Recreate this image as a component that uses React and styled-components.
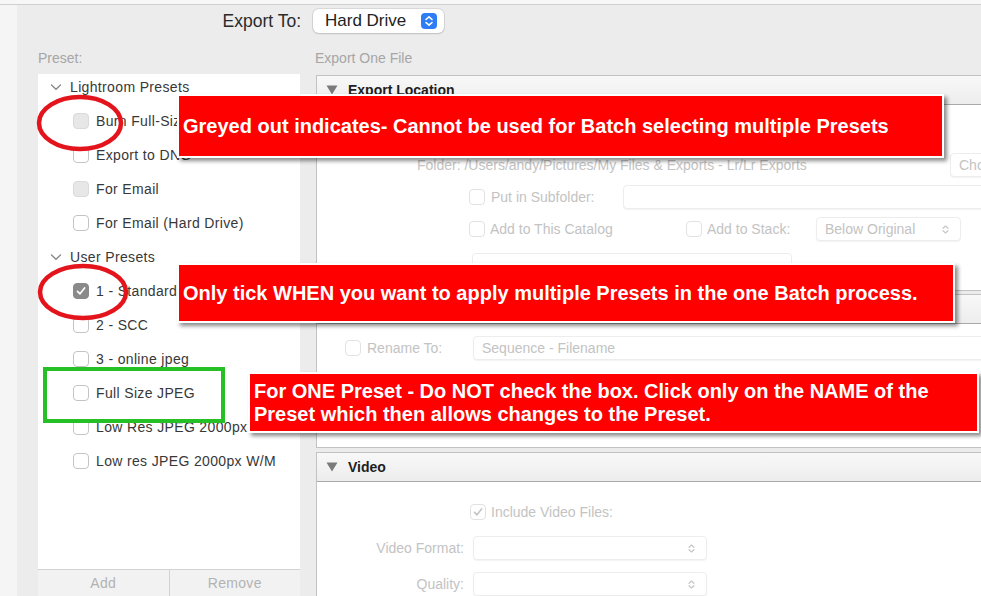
import React from 'react'
import styled, { createGlobalStyle } from 'styled-components'

const GlobalStyle = createGlobalStyle`
  html, body { margin: 0; padding: 0; }
  body {
    width: 981px;
    height: 596px;
    overflow: hidden;
    background: #f7f7f7;
    font-family: "Liberation Sans", Arial, sans-serif;
  }
`;

const Screen = styled.div`
  position: relative;
  width: 981px;
  height: 596px;
  padding-top: 4px;
  box-sizing: border-box;
  overflow: hidden;
  background: #f7f7f7;
`;

const Window = styled.div`
  height: 592px;
  box-sizing: border-box;
  border-top: 1px solid #d0d0d0;
  display: flex;
`;

const SideStrip = styled.div`
  width: 17px;
  background: #f5f5f5;
`;

const Main = styled.div`
  flex: 1;
  background: #ececec;
  display: flex;
  flex-direction: column;
  min-width: 0;
  min-height: 0;
`;

const TopBar = styled.div`
  height: 38px;
  flex: none;
  display: grid;
  grid-template-columns: 284px auto;
  column-gap: 12px;
  padding-top: 4px;
  box-sizing: border-box;
`;

const TopLabel = styled.div`
  text-align: right;
  font-size: 17.5px;
  line-height: 24px;
  color: #2a2a2a;
`;

const Popup = styled.div`
  width: 131px;
  height: 24px;
  box-sizing: border-box;
  display: flex;
  align-items: center;
  justify-content: space-between;
  padding: 0 7px 0 12px;
  background: #fff;
  border-radius: 6px;
  box-shadow: 0 0 0 1px rgba(0, 0, 0, 0.08), 0 1px 2px rgba(0, 0, 0, 0.12);
  font-size: 17px;
  color: #222;
`;

const Columns = styled.div`
  flex: 1;
  display: grid;
  grid-template-columns: 262px 1fr;
  grid-template-rows: minmax(0, 1fr);
  column-gap: 14px;
  padding-left: 21px;
  min-height: 0;
  overflow: hidden;
`;

const Column = styled.div`
  display: flex;
  flex-direction: column;
  min-width: 0;
  min-height: 0;
  overflow: hidden;
`;

const ColumnLabel = styled.div`
  height: 31px;
  flex: none;
  box-sizing: border-box;
  padding-top: 6px;
  font-size: 14px;
  line-height: 18px;
  color: #a6a6a6;
  padding-left: ${(p) => p.$indent || 0}px;
`;

const PresetPanel = styled.div`
  flex: 1;
  min-height: 0;
  display: flex;
  flex-direction: column;
  background: #fff;
`;

const PresetList = styled.div`
  flex: 1;
  min-height: 0;
`;

const PresetRow = styled.div`
  height: 34px;
  box-sizing: border-box;
  padding: 0 0 8px ${(p) => (p.$group ? 12 : 35)}px;
  display: flex;
  align-items: center;
  gap: ${(p) => (p.$group ? 8 : 7)}px;
  font-size: 14px;
  letter-spacing: 0.35px;
  color: #383838;
  white-space: nowrap;
`;

const ButtonBar = styled.div`
  height: 26px;
  flex: none;
  display: flex;
  border-top: 1px solid #d2d2d2;
  background: #f2f2f2;
`;

const BarButton = styled.div`
  flex: 1;
  display: flex;
  align-items: center;
  justify-content: center;
  font-size: 14px;
  letter-spacing: 0.3px;
  color: #b3b3b3;
  & + & { border-left: 1px solid #d2d2d2; }
`;

const Box = styled.span`
  flex: none;
  width: 16px;
  height: 16px;
  box-sizing: border-box;
  border-radius: 4px;
  display: inline-flex;
  align-items: center;
  justify-content: center;
  border: 1px solid
    ${(p) => ({ off: '#c4c4c4', greyed: '#dadada', checked: '#8a8a8a', faint: '#e2e2e2', faintChecked: '#e2e2e2' }[p.$state])};
  background: ${(p) => ({ off: '#fff', greyed: '#e7e7e7', checked: '#8a8a8a', faint: '#fff', faintChecked: '#fff' }[p.$state])};
`;

const ScrollArea = styled.div`
  flex: 1;
  min-height: 0;
  overflow: hidden;
  padding: 1px 0 0 2px;
  min-width: 0;
`;

const Section = styled.div`
  width: 700px;
  border: 1px solid #c2c2c2;
  margin-bottom: ${(p) => p.$gap || 3}px;
  background: #fff;
`;

const SectionHeader = styled.div`
  height: 28px;
  display: flex;
  align-items: center;
  gap: 10px;
  padding-left: 9px;
  border-bottom: 1px solid #a9a9a9;
  background: linear-gradient(#f8f8f8, #ededed);
  font-size: 14px;
  font-weight: bold;
  color: #1e1e1e;
`;

const SectionBody = styled.div`
  height: ${(p) => p.$height}px;
  padding-top: ${(p) => p.$top}px;
  box-sizing: border-box;
  display: flex;
  flex-direction: column;
  gap: ${(p) => p.$gap || 8}px;
`;

const FieldRow = styled.div`
  height: 24px;
  flex: none;
  display: flex;
  align-items: center;
  padding-left: ${(p) => p.$indent}px;
  font-size: 14px;
  color: #c3c3c3;
  white-space: nowrap;
  margin-top: ${(p) => p.$shift || 0}px;
`;

const FieldText = styled.span`
  flex: none;
  width: ${(p) => (p.$width ? `${p.$width}px` : 'auto')};
  margin-left: ${(p) => p.$gap || 0}px;
  text-align: ${(p) => p.$align || 'left'};
  overflow: hidden;
`;

const Field = styled.div`
  flex: none;
  width: ${(p) => p.$width}px;
  height: 24px;
  box-sizing: border-box;
  margin-left: ${(p) => p.$gap || 0}px;
  display: flex;
  align-items: center;
  justify-content: space-between;
  padding: 0 8px;
  border: 1px solid #ededed;
  border-radius: 4px;
  box-shadow: 0 1px 1px rgba(0, 0, 0, 0.05);
  background: #fff;
  color: #c3c3c3;
  font-size: 14px;
`;

const Note = styled.div`
  position: absolute;
  left: ${(p) => p.$x}px;
  top: ${(p) => p.$y}px;
  width: ${(p) => p.$w}px;
  height: ${(p) => p.$h}px;
  box-sizing: border-box;
  padding: 0 4px;
  display: flex;
  flex-direction: column;
  justify-content: center;
  background: #fe0000;
  border: 2px solid #fff;
  box-shadow: 3px 3px 4px rgba(0, 0, 0, 0.45);
  color: #fff;
  font-size: 20px;
  line-height: 23px;
  font-weight: bold;
  white-space: nowrap;
`;

const Marks = styled.svg`
  position: absolute;
  left: 0;
  top: 0;
  pointer-events: none;
`;

const Stepper = ({ color = '#2f7df6', stroke = '#fff', size = 16 }) => (
  <svg width={size} height={size} viewBox="0 0 16 16">
    {color !== 'none' && <rect x="0" y="0" width="16" height="16" rx="4" fill={color} />}
    <polyline points="5,6.5 8,3.8 11,6.5" fill="none" stroke={stroke} strokeWidth="1.6" strokeLinecap="round" strokeLinejoin="round" />
    <polyline points="5,9.5 8,12.2 11,9.5" fill="none" stroke={stroke} strokeWidth="1.6" strokeLinecap="round" strokeLinejoin="round" />
  </svg>
);

const Chevron = () => (
  <svg width="12" height="8" viewBox="0 0 12 8">
    <polyline points="1.5,2 6,6.2 10.5,2" fill="none" stroke="#8a8a8a" strokeWidth="1.4" strokeLinecap="round" />
  </svg>
);

const Triangle = () => (
  <svg width="12" height="10" viewBox="0 0 12 10">
    <polygon points="0.5,0.5 11.5,0.5 6,9.5" fill="#7a7a7a" />
  </svg>
);

const Tick = ({ color = '#fff' }) => (
  <svg width="12" height="12" viewBox="0 0 12 12">
    <polyline points="2.5,6.3 5,8.8 9.6,3" fill="none" stroke={color} strokeWidth="1.7" strokeLinecap="round" strokeLinejoin="round" />
  </svg>
);

const Check = ({ state }) => (
  <Box $state={state}>
    {state === 'checked' && <Tick />}
    {state === 'faintChecked' && <Tick color="#c6c6c6" />}
  </Box>
);

const presets = [
  { group: 'Lightroom Presets' },
  { name: 'Burn Full-Sized JPEGs', state: 'greyed' },
  { name: 'Export to DNG', state: 'off' },
  { name: 'For Email', state: 'greyed' },
  { name: 'For Email (Hard Drive)', state: 'off' },
  { group: 'User Presets' },
  { name: '1 - Standard', state: 'checked' },
  { name: '2 - SCC', state: 'off' },
  { name: '3 - online jpeg', state: 'off' },
  { name: 'Full Size JPEG', state: 'off' },
  { name: 'Low Res JPEG 2000px', state: 'off' },
  { name: 'Low res JPEG 2000px W/M', state: 'off' },
];

export default function App() {
  return (
    <Screen>
      <GlobalStyle />
      <Window>
        <SideStrip />
        <Main>
          <TopBar>
            <TopLabel>Export To:</TopLabel>
            <Popup>
              Hard Drive
              <Stepper />
            </Popup>
          </TopBar>

          <Columns>
            <Column>
              <ColumnLabel>Preset:</ColumnLabel>
              <PresetPanel>
                <PresetList>
                  {presets.map((p) =>
                    p.group ? (
                      <PresetRow key={p.group} $group>
                        <Chevron />
                        {p.group}
                      </PresetRow>
                    ) : (
                      <PresetRow key={p.name}>
                        <Check state={p.state} />
                        {p.name}
                      </PresetRow>
                    )
                  )}
                </PresetList>
                <ButtonBar>
                  <BarButton>Add</BarButton>
                  <BarButton>Remove</BarButton>
                </ButtonBar>
              </PresetPanel>
            </Column>

            <Column>
              <ColumnLabel $indent={1}>Export One File</ColumnLabel>
              <ScrollArea>
                <Section>
                  <SectionHeader>
                    <Triangle />
                    Export Location
                  </SectionHeader>
                  <SectionBody $height={185} $top={48}>
                    <FieldRow $indent={100}>
                      <FieldText $width={533}>Folder: /Users/andy/Pictures/My Files &amp; Exports - Lr/Lr Exports</FieldText>
                      <Field $width={90}>Choose...</Field>
                    </FieldRow>
                    <FieldRow $indent={152}>
                      <Check state="faint" />
                      <FieldText $gap={6} $width={132}>Put in Subfolder:</FieldText>
                      <Field $width={400} />
                    </FieldRow>
                    <FieldRow $indent={152}>
                      <Check state="faint" />
                      <FieldText $gap={5} $width={196}>Add to This Catalog</FieldText>
                      <Check state="faint" />
                      <FieldText $gap={5} $width={109}>Add to Stack:</FieldText>
                      <Field $width={145}>
                        Below Original
                        <Stepper color="none" stroke="#c8c8c8" size={13} />
                      </Field>
                    </FieldRow>
                    <FieldRow $indent={155} $shift={4}>
                      <Field $width={320} />
                    </FieldRow>
                  </SectionBody>
                </Section>

                <Section $gap={4}>
                  <SectionHeader>
                    <Triangle />
                    File Naming
                  </SectionHeader>
                  <SectionBody $height={123} $top={12}>
                    <FieldRow $indent={28}>
                      <Check state="faint" />
                      <FieldText $gap={6} $width={106}>Rename To:</FieldText>
                      <Field $width={560}>Sequence - Filename</Field>
                    </FieldRow>
                  </SectionBody>
                </Section>

                <Section>
                  <SectionHeader>
                    <Triangle />
                    Video
                  </SectionHeader>
                  <SectionBody $height={140} $top={18} $gap={12}>
                    <FieldRow $indent={153}>
                      <Check state="faintChecked" />
                      <FieldText $gap={5}>Include Video Files:</FieldText>
                    </FieldRow>
                    <FieldRow $indent={0}>
                      <FieldText $width={147} $align="right">Video Format:</FieldText>
                      <Field $gap={9} $width={234}>
                        <span />
                        <Stepper color="none" stroke="#c8c8c8" size={13} />
                      </Field>
                    </FieldRow>
                    <FieldRow $indent={0}>
                      <FieldText $width={147} $align="right">Quality:</FieldText>
                      <Field $gap={9} $width={234}>
                        <span />
                        <Stepper color="none" stroke="#c8c8c8" size={13} />
                      </Field>
                    </FieldRow>
                  </SectionBody>
                </Section>
              </ScrollArea>
            </Column>
          </Columns>
        </Main>
      </Window>

      <Marks width="981" height="596" viewBox="0 0 981 596">
        <ellipse cx="80" cy="123" rx="41" ry="26" fill="none" stroke="#e3141b" strokeWidth="4.5" />
        <ellipse cx="83" cy="292" rx="43" ry="26" fill="none" stroke="#e3141b" strokeWidth="4.5" />
        <rect x="45" y="369" width="178" height="52" fill="none" stroke="#24c025" strokeWidth="4" />
      </Marks>

      <Note $x={177} $y={94} $w={767} $h={64}>
        Greyed out indicates- Cannot be used for Batch selecting multiple Presets
      </Note>
      <Note $x={177} $y={263} $w={778} $h={60}>
        Only tick WHEN you want to apply multiple Presets in the one Batch process.
      </Note>
      <Note $x={248} $y={372} $w={731} $h={61}>
        <div>For ONE Preset - Do NOT check the box. Click only on the NAME of the</div>
        <div>Preset which then allows changes to the Preset.</div>
      </Note>
    </Screen>
  );
}
